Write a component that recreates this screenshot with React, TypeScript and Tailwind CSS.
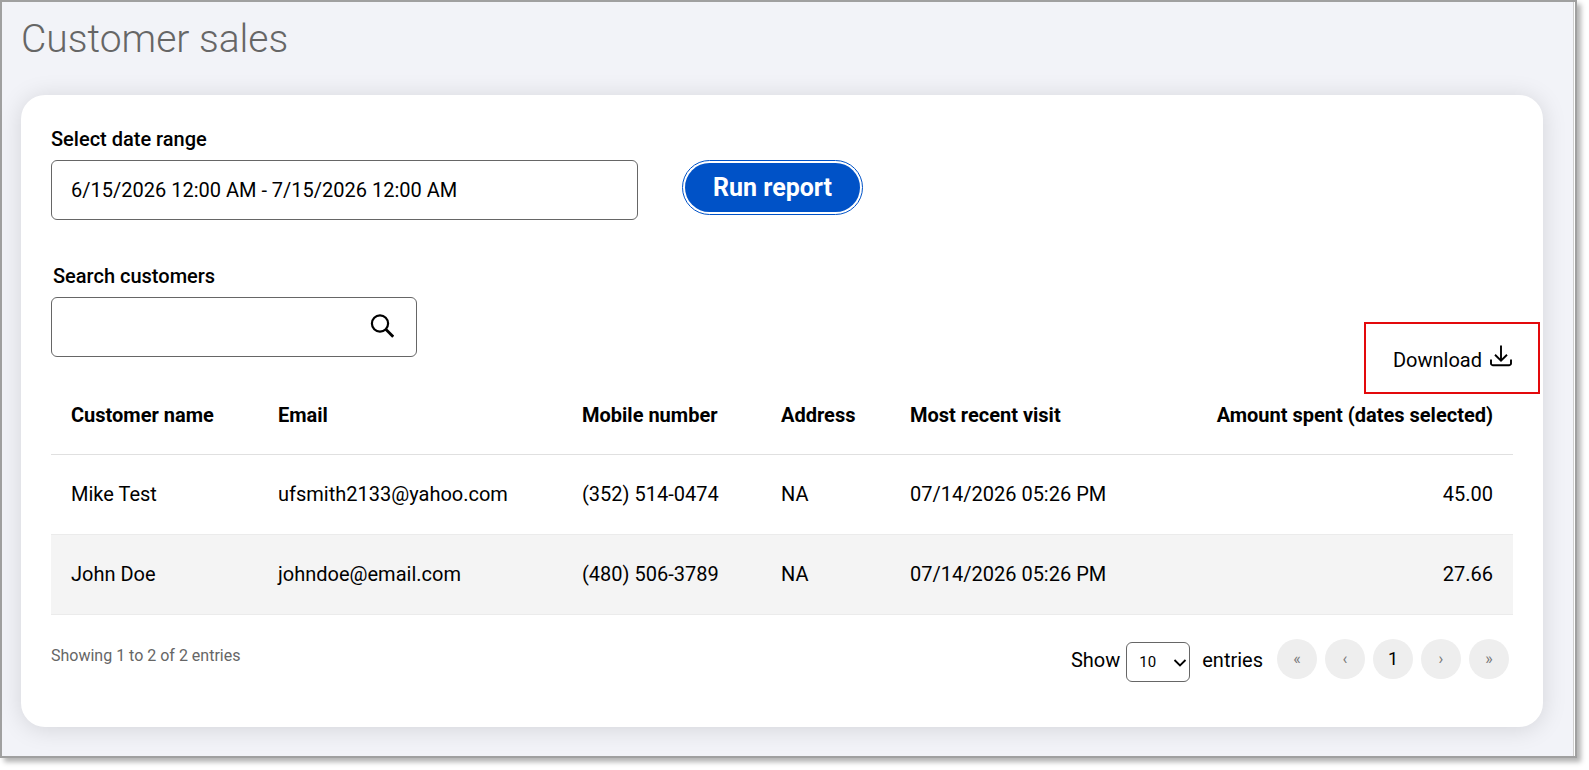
import { useState } from 'react';

interface Customer {
  name: string;
  email: string;
  mobile: string;
  address: string;
  lastVisit: string;
  spent: string;
}

const customers: Customer[] = [
  {
    name: 'Mike Test',
    email: 'ufsmith2133@yahoo.com',
    mobile: '(352) 514-0474',
    address: 'NA',
    lastVisit: '07/14/2026 05:26 PM',
    spent: '45.00',
  },
  {
    name: 'John Doe',
    email: 'johndoe@email.com',
    mobile: '(480) 506-3789',
    address: 'NA',
    lastVisit: '07/14/2026 05:26 PM',
    spent: '27.66',
  },
];

const pages = [
  { label: 'First page', text: '«' },
  { label: 'Previous page', text: '‹' },
  { label: 'Page 1', text: '1', current: true },
  { label: 'Next page', text: '›' },
  { label: 'Last page', text: '»' },
];

function SearchIcon() {
  return (
    <svg width="24" height="24" viewBox="0 0 24 24" fill="none" stroke="currentColor" aria-hidden="true">
      <circle cx="10" cy="9.5" r="8.1" strokeWidth="2.2" />
      <path d="M15.5 15l7.7 7.7" strokeWidth="2.8" />
    </svg>
  );
}

function DownloadIcon() {
  return (
    <svg width="22" height="22" viewBox="0 0 22 22" fill="none" stroke="currentColor" strokeWidth="1.9" aria-hidden="true">
      <path d="M11 0.5v15" />
      <path d="M5 9.8l6 5.8 6-5.8" />
      <path d="M1 14.5v4a1.7 1.7 0 0 0 1.7 1.7h16.6a1.7 1.7 0 0 0 1.7-1.7v-4" />
    </svg>
  );
}

function CustomerTable({ rows }: { rows: Customer[] }) {
  return (
    <table className="w-full table-fixed border-collapse text-left">
      <colgroup>
        <col className="w-[207px]" />
        <col className="w-[304px]" />
        <col className="w-[199px]" />
        <col className="w-[129px]" />
        <col className="w-[260px]" />
        <col />
      </colgroup>
      <thead>
        <tr className="h-[60px] border-b border-[#e0e0e0] align-top">
          <th className="px-5 pt-[9px] font-bold">Customer name</th>
          <th className="px-5 pt-[9px] font-bold">Email</th>
          <th className="px-5 pt-[9px] font-bold">Mobile number</th>
          <th className="px-5 pt-[9px] font-bold">Address</th>
          <th className="px-5 pt-[9px] font-bold">Most recent visit</th>
          <th className="px-5 pt-[9px] text-right font-bold">Amount spent (dates selected)</th>
        </tr>
      </thead>
      <tbody>
        {rows.map((row) => (
          <tr key={row.email} className="h-20 border-b border-[#ebebeb] even:bg-[#f4f4f4]">
            <td className="px-5">{row.name}</td>
            <td className="px-5">{row.email}</td>
            <td className="px-5">{row.mobile}</td>
            <td className="px-5">{row.address}</td>
            <td className="px-5">{row.lastVisit}</td>
            <td className="px-5 text-right">{row.spent}</td>
          </tr>
        ))}
      </tbody>
    </table>
  );
}

export default function App() {
  const [range, setRange] = useState('6/15/2026 12:00 AM - 7/15/2026 12:00 AM');
  const [search, setSearch] = useState('');
  const [pageSize, setPageSize] = useState('10');

  const rows = customers.filter((c) => c.name.toLowerCase().includes(search.toLowerCase()));

  return (
    <div className="bg-white pr-3 pb-3 font-[Roboto,sans-serif] text-xl leading-6 text-black">
      <div className="border-2 border-[#a0a0a0] bg-white pr-px shadow-[4px_4px_5px_rgba(0,0,0,0.3)]">
        <main className="border-r border-[#cfcfcf] bg-[#f2f3f8] pt-3 pr-[30px] pb-[29px] pl-[19px]">
          <h1 className="text-[39px] leading-[50px] font-light text-[#666]">Customer sales</h1>

          <section className="mt-[31px] rounded-3xl bg-white pt-8 pb-[45px] shadow-[0_2px_25px_rgba(0,0,0,0.13)]">
            {/* Date range */}
            <div className="flex items-end px-[30px]">
              <div className="flex w-[587px] flex-col gap-[9px]">
                <label htmlFor="range" className="font-medium">
                  Select date range
                </label>
                <input
                  id="range"
                  value={range}
                  onChange={(e) => setRange(e.target.value)}
                  className="h-[60px] rounded-md border border-[#666] px-[19px]"
                />
              </div>
              <button className="mb-[5px] ml-11 h-[55px] rounded-full border border-[#0052c7] p-[2px]">
                <span className="flex h-full items-center rounded-full bg-[#0052c7] px-7 text-[25px] font-bold text-white">
                  Run report
                </span>
              </button>
            </div>

            {/* Search and download */}
            <div className="mt-11 flex items-end justify-between pr-[3px] pl-[30px]">
              <div className="mb-[37px] flex w-[366px] flex-col gap-[9px]">
                <label htmlFor="search" className="pl-0.5 font-medium">
                  Search customers
                </label>
                <div className="flex h-[60px] items-center rounded-md border border-[#666] pr-[22px] pb-0.5 pl-[19px]">
                  <input
                    id="search"
                    value={search}
                    onChange={(e) => setSearch(e.target.value)}
                    className="min-w-0 flex-1 outline-none"
                  />
                  <button aria-label="Search">
                    <SearchIcon />
                  </button>
                </div>
              </div>
              <button className="flex h-[72px] w-44 items-baseline justify-end gap-2 border-2 border-[#e3090c] pt-[21px] pr-[26px]">
                Download
                <DownloadIcon />
              </button>
            </div>

            <div className="px-[30px]">
              <CustomerTable rows={rows} />

              {/* Footer */}
              <div className="mt-6 flex items-start justify-between">
                <p className="pt-[5px] text-base leading-6 text-[#666]">Showing 1 to 2 of 2 entries</p>
                <div className="flex items-start pr-1">
                  <div className="flex items-center pt-[3px]">
                    <label htmlFor="page-size" className="pb-1">
                      Show
                    </label>
                    <div className="relative mr-3 ml-1.5">
                      <select
                        id="page-size"
                        value={pageSize}
                        onChange={(e) => setPageSize(e.target.value)}
                        className="block h-10 w-16 appearance-none rounded-md border border-[#666] pl-3 text-[15px]"
                      >
                        <option>10</option>
                        <option>25</option>
                        <option>50</option>
                      </select>
                      <svg
                        className="pointer-events-none absolute top-4 right-[3px]"
                        width="14"
                        height="10"
                        viewBox="0 0 14 10"
                        fill="none"
                        stroke="currentColor"
                        strokeWidth="1.8"
                        aria-hidden="true"
                      >
                        <path d="M1.5 2l5.5 5.5 5.5-5.5" />
                      </svg>
                    </div>
                    <span className="pb-1">entries</span>
                  </div>
                  <nav aria-label="Pagination" className="ml-3.5 flex gap-2">
                    {pages.map((page) => (
                      <button
                        key={page.label}
                        aria-label={page.label}
                        className={
                          page.current
                            ? 'h-10 w-10 rounded-full bg-[#eee] text-lg text-black'
                            : 'h-10 w-10 rounded-full bg-[#eee] text-base text-[#777]'
                        }
                      >
                        {page.text}
                      </button>
                    ))}
                  </nav>
                </div>
              </div>
            </div>
          </section>
        </main>
      </div>
    </div>
  );
}
